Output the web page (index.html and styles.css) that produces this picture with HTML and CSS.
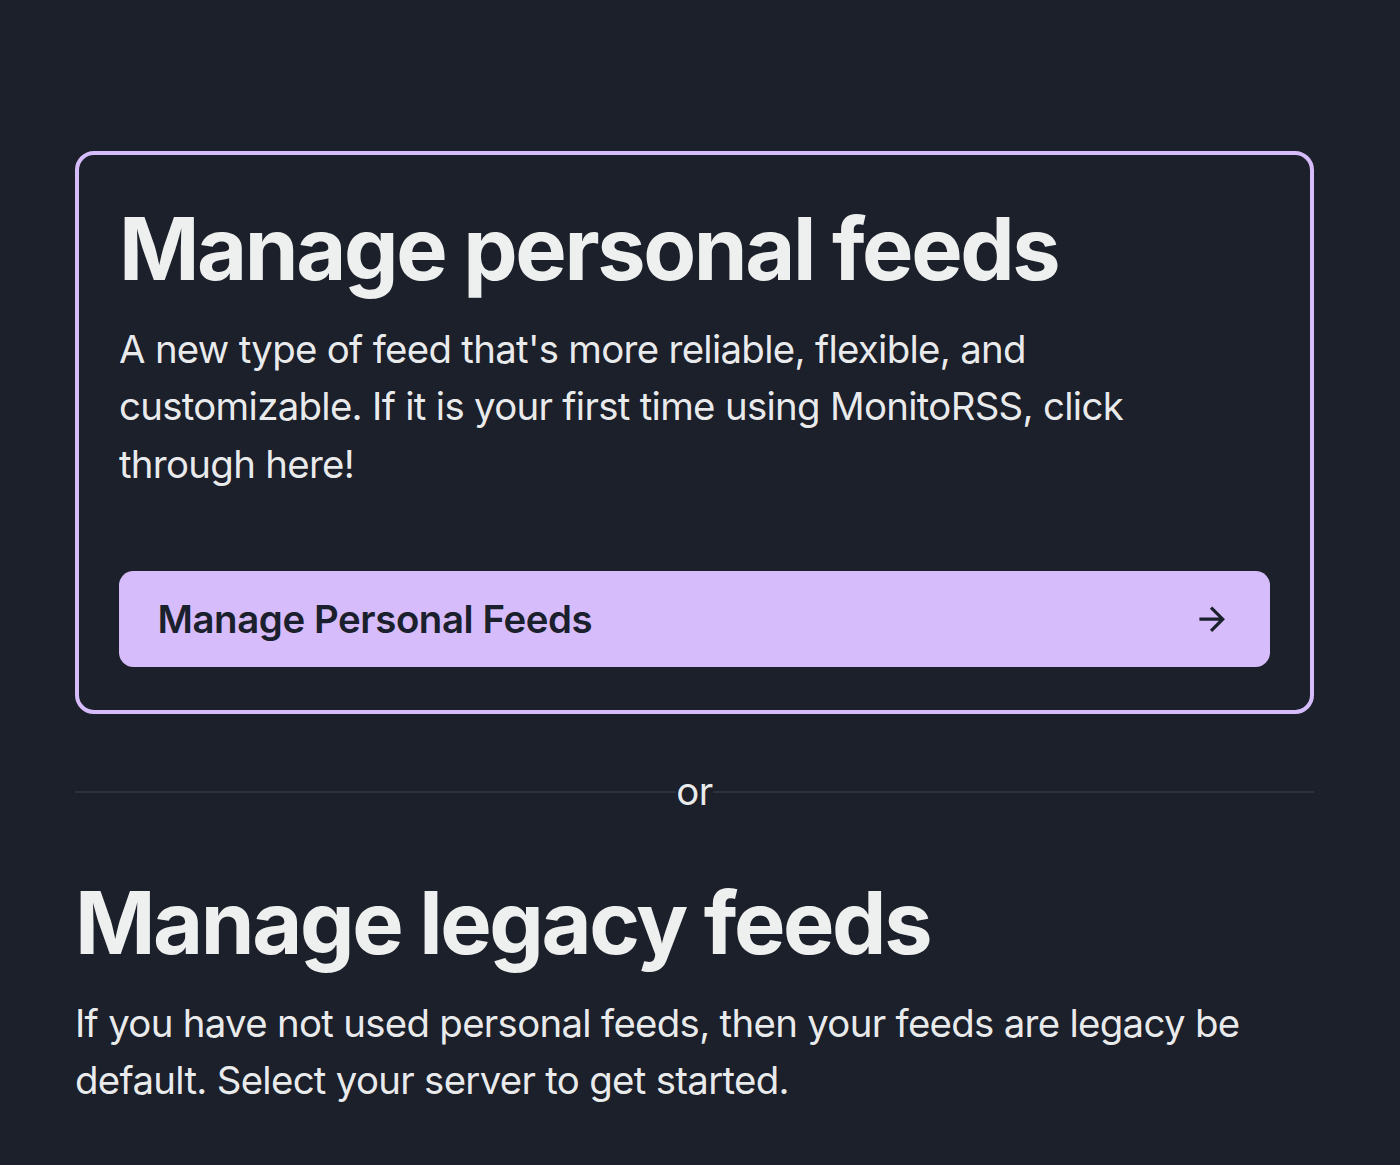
FILE: index.html
```html
<!DOCTYPE html>
<html lang="en">

<head>
    <meta charset="UTF-8">
    <meta name="viewport" content="width=device-width, initial-scale=1.0">
    <title>MonitoRSS - Feeds</title>
    <link rel="stylesheet" href="styles.css">
</head>

<body>
    <main class="page">
        <section class="personal-card">
            <h1 class="title">Manage personal feeds</h1>
            <p class="lead card-lead">A new type of feed that's more reliable, flexible, and customizable. If it is your first time using MonitoRSS, click through here!</p>
            <a href="#" class="primary-btn">
                <span>Manage Personal Feeds</span>
                <svg class="arrow" viewBox="0 0 24 24" aria-hidden="true">
                    <path d="M12 4l-1.41 1.41L16.17 11H4v2h12.17l-5.58 5.59L12 20l8-8z"></path>
                </svg>
            </a>
        </section>

        <div class="divider">
            <span class="divider-line"></span>
            <span class="divider-text">or</span>
            <span class="divider-line"></span>
        </div>

        <section class="legacy">
            <h1 class="title">Manage legacy feeds</h1>
            <p class="lead">If you have not used personal feeds, then your feeds are legacy be default. Select your server to get started.</p>
        </section>
    </main>
</body>

</html>
```

FILE: styles.css
```css
body {
    margin: 0;
    background-color: #1b202b;
    color: rgba(255, 255, 255, 0.92);
    font-family: Inter, "Noto Sans", sans-serif;
    min-height: 100vh;
}

.page {
    width: 1239px;
    padding: 151px 0 0 75px;
}

.personal-card {
    border: 4.8px solid #d6bcfa;
    border-radius: 19px;
    padding: 42px 40px 43px 40px;
}

.title {
    margin: 0;
    font-size: 86.4px;
    line-height: 1.2;
    font-weight: 700;
    color: #eef0ef;
    letter-spacing: -2.4px;
}

.lead {
    margin: 20px 0 0;
    font-size: 38.4px;
    line-height: 57.6px;
    letter-spacing: -0.7px;
}

.card-lead {
    max-width: 1100px;
}

.primary-btn {
    margin-top: 78px;
    display: flex;
    align-items: center;
    justify-content: space-between;
    height: 96px;
    padding: 0 38.4px;
    background-color: #d6bcfa;
    border-radius: 14.4px;
    color: #1a202c;
    font-size: 38.4px;
    font-weight: 600;
    letter-spacing: -0.4px;
    text-decoration: none;
}

.arrow {
    width: 38.4px;
    height: 38.4px;
    fill: currentColor;
}

.divider {
    display: flex;
    align-items: center;
    margin: 49px 0 50px;
}

.divider-line {
    flex: 1;
    height: 2px;
    background-color: #2c313d;
}

.divider-text {
    font-size: 38.4px;
    line-height: 57.6px;
    letter-spacing: -0.4px;
}
```
